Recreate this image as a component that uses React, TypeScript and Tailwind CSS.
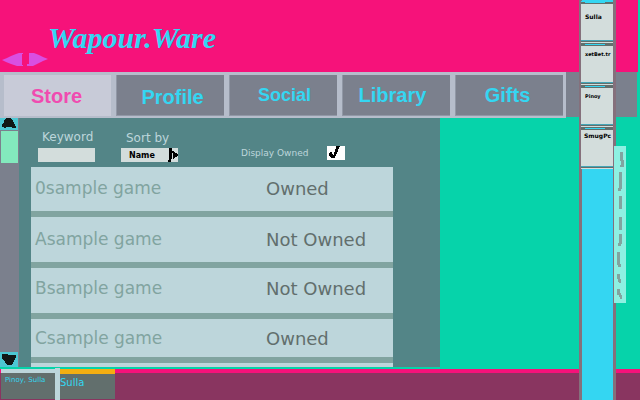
const tabs = [
  { name: "Store", style: "bg-[#c8cbd8] text-[#f04bb0] text-xl pr-[2px]", width: "w-[107px]" },
  { name: "Profile", style: "bg-[#7b808d] text-[#34d6f2] text-xl border-l border-b border-[#9198a6] pt-1 pl-1", width: "w-[108px]" },
  { name: "Social", style: "bg-[#7b808d] text-[#34d6f2] text-lg border-l border-b border-[#9198a6] pl-[2px]", width: "w-[108px]" },
  { name: "Library", style: "bg-[#7b808d] text-[#34d6f2] text-xl pr-2 border-l border-b border-[#9198a6]", width: "w-[108px]" },
  { name: "Gifts", style: "bg-[#7b808d] text-[#34d6f2] text-xl pr-1 border-l border-b border-[#9198a6]", width: "w-[108px]" },
];

const games = [
  { name: "0sample game", status: "Owned", style: "h-[50px]" },
  { name: "Asample game", status: "Not Owned", style: "h-[51px]" },
  { name: "Bsample game", status: "Not Owned", style: "h-[51px] pb-1" },
  { name: "Csample game", status: "Owned", style: "h-[44px] pt-[2px]" },
];

const friends = [
  { name: "Sulla", style: "text-[6px] pt-[9px] pl-1" },
  { name: "xetBet.tr", style: "text-[5px] pt-1 pl-1" },
  { name: "Pinoy", style: "text-[5px] pt-1 pl-1" },
  { name: "SmugPc", style: "text-[6px] pt-[2px] pl-[3px]" },
];

function Tabs() {
  return (
    <nav className="flex h-[46px]">
      <div className="flex items-start gap-[5px] bg-[#b6bdcb] pt-[3px] pr-[3px] pl-1">
        {tabs.map((tab) => (
          <button
            key={tab.name}
            className={`flex h-[41px] items-center justify-center font-['Liberation_Sans',sans-serif] font-bold ${tab.width} ${tab.style}`}
          >
            {tab.name}
          </button>
        ))}
      </div>
      <div className="mr-[3px] mb-px flex-1 bg-[#7b808d]" />
    </nav>
  );
}

function ScrollBar() {
  return (
    <div className="flex w-[19px] flex-col justify-between bg-[#7b808d] pr-px">
      <div>
        <button aria-label="Scroll up" className="block h-3 w-full bg-[#4dc7d3]">
          <svg viewBox="0 0 18 12" className="h-3 w-[18px]" fill="#111817">
            <path d="M6 0H11V1H12V2H13V4H14V6H15V8H16V10H12V9H6V10H4V9H2V6H3V5H4V2H5V1H6Z" />
          </svg>
        </button>
        <div className="mt-px ml-px h-8 bg-[#83e9bd]" />
      </div>
      <button aria-label="Scroll down" className="block h-[15px] w-full bg-[#4dc7d3]">
        <svg viewBox="0 0 18 15" className="h-[15px] w-[18px]" fill="#111817">
          <path d="M2 2H8V3H16V6H15V8H14V10H13V12H12V13H7V12H6V11H5V9H4V8H3V7H2Z" />
        </svg>
      </button>
    </div>
  );
}

function Filters() {
  return (
    <form className="flex h-[49px] items-start pl-[19px] text-xs leading-4 text-[#bdd6db]">
      <div className="w-[83px] pt-[11px]">
        <label htmlFor="keyword" className="block pl-1">Keyword</label>
        <input id="keyword" className="mt-[3px] block h-[14px] w-[57px] bg-[#d3dddc] px-1 text-[8px] text-black" />
      </div>
      <div className="w-[120px] pt-[11px]">
        <label htmlFor="sort" className="block pt-px pl-[5px]">Sort by</label>
        <div className="relative mt-[2px] h-[14px] w-[57px]">
          <select id="sort" className="block h-full w-full appearance-none bg-[#d3dddc] pt-px pl-2 text-[8px] leading-[14px] font-bold text-black">
            <option>Name</option>
          </select>
          <svg viewBox="0 0 10 14" className="pointer-events-none absolute top-0 right-0 h-[14px] w-[10px]">
            <path d="M1 0H4V3H6V4H7V5H9V6H10V8H9V9H7V10H6V11H5V5H4V11H3V14H0V12H1Z" fill="#000" />
          </svg>
        </div>
      </div>
      <label htmlFor="owned" className="w-[86px] pt-[27px] text-[9px]">Display Owned</label>
      <span className="relative mt-[28px] block h-[14px] w-[18px]">
        <input id="owned" type="checkbox" defaultChecked className="block h-full w-full appearance-none bg-white" />
        <svg viewBox="0 0 18 14" className="pointer-events-none absolute inset-0" fill="#000">
          <path d="M9 0H13V1H12V3H11V6H10V8H9V10H8V12H4V11H3V10H2V7H3V6H5V8H6V9H7V6H8V3H9Z" />
        </svg>
      </span>
    </form>
  );
}

function Store() {
  return (
    <main className="flex flex-1 bg-[#06d3aa]">
      <ScrollBar />
      <section className="flex w-[421px] flex-col bg-[#538587]">
        <Filters />
        <ul className="mr-[47px] ml-3 flex-1 bg-[#bdd6db]">
          {games.map((game) => (
            <li
              key={game.name}
              className={`flex items-center border-b-6 border-[#81a4a0] pl-1 ${game.style}`}
            >
              <span className="w-[231px] text-[17px] text-[#81a4a0]">{game.name}</span>
              <span className="text-lg text-[#626f6d]">{game.status}</span>
            </li>
          ))}
        </ul>
      </section>
    </main>
  );
}

function ChatBar() {
  return (
    <footer className="mt-[2px] flex h-[31px] border-t-4 border-[#f6127a] bg-[#893560] text-[#34d6f2]">
      <button className="-mt-1 ml-px mb-px w-[54px] border-t-4 border-[#bdd6db] bg-[#626f6d] pb-3 pl-1 text-left text-[7px] leading-3 whitespace-nowrap">
        Pinoy, Sulla
      </button>
      <div className="-mt-[5px] w-[5px] bg-[#bdd6db]" />
      <button className="-mt-1 mb-px w-[55px] border-t-5 border-[#f4ae12] bg-[#626f6d] pb-2 text-left text-[10px]">
        Sulla
      </button>
    </footer>
  );
}

function FriendList() {
  return (
    <aside className="absolute inset-y-0 right-6 w-[37px] border-x-3 border-[#85707c] bg-[#34d6f2]">
      <ul className="-ml-px pt-px">
        {friends.map((friend) => (
          <li
            key={friend.name}
            className="h-[42px] border-t border-b border-t-[#626f6d] border-b-[#d3dddc] bg-[#34d6f2] first:border-t-[#34d6f2]"
          >
            <div className="flex h-px justify-between">
              <div className="w-1 bg-[#626f6d]" />
              <div className="w-2 bg-[#626f6d]" />
            </div>
            <div className="h-[39px] border-t border-b border-[#626f6d] bg-[#d3dddc]">
              <div className={`h-[37px] overflow-hidden border-b border-[#45a6b8] leading-[8px] font-bold text-black ${friend.style}`}>
                {friend.name}
              </div>
            </div>
          </li>
        ))}
      </ul>
    </aside>
  );
}

function SideTab() {
  return (
    <button aria-label="Open side panel" className="absolute top-[146px] right-[14px] h-[157px] w-3 bg-[#8ef0e2]">
      <svg viewBox="0 0 12 157" className="h-[157px] w-3" fill="#81a4a0">
        <path d="M6 6H9V14H10V21H6V19H7V15H6Z" />
        <path d="M5 26H8V43H7V45H4V42H5Z" />
        <path d="M5 50H8V63H5Z" />
        <path d="M5 71H8V84H5Z" />
        <path d="M5 88H8V98H7V100H4V97H5Z" />
        <path d="M3 106H6V118H7V121H4V119H3Z" />
        <path d="M3 128H6V133H7V137H5V136H4V133H3Z" />
        <path d="M3 143H6V147H7V149H8V153H6V151H5V149H3Z" />
      </svg>
    </button>
  );
}

export default function App() {
  return (
    <div className="relative flex min-h-screen flex-col overflow-hidden bg-[#06d3aa] font-['DejaVu_Sans',sans-serif]">
      <div className="mr-[2px] bg-[#f6127a]">
        <header className="h-[72px] pt-5 pl-12">
          <h1 className="font-['Liberation_Serif',serif] text-[30px] leading-9 font-bold text-[#34d6f2] italic">
            Wapour.Ware
          </h1>
          <svg viewBox="0 0 46 14" className="-mt-1 -ml-[46px] h-[14px] w-[46px]" fill="#d94fe2">
            <path d="M0 8L5 6L9 4L14 2L17 1H21V2H20V13H21V14H15L9 12L4 10Z" />
            <path d="M27 1H32L37 3L41 5L46 7L41 9L35 12L31 14H25V12H27Z" />
          </svg>
        </header>
      </div>
      <Tabs />
      <Store />
      <ChatBar />
      <FriendList />
      <SideTab />
    </div>
  );
}
